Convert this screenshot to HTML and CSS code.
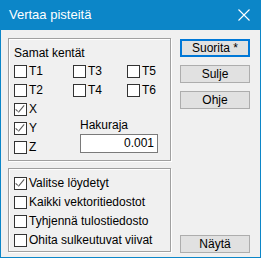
FILE: index.html
```html
<!DOCTYPE html>
<html>
<head>
<meta charset="utf-8">
<link rel="stylesheet" href="styles.css">
</head>
<body>
<div class="window">
  <div class="titlebar">
    <span class="title">Vertaa pisteitä</span>
    <svg class="close" width="12" height="12" viewBox="0 0 12 12"><path d="M0.5 0.5 L11.5 11.5 M11.5 0.5 L0.5 11.5" stroke="#fff" stroke-width="1.1" fill="none"/></svg>
  </div>
  <div class="body">
    <div class="left">
      <div class="group g1">
        <div class="glabel">Samat kentät</div>
        <div class="grid">
          <label class="cb"><span class="box"></span>T1</label>
          <label class="cb"><span class="box"></span>T3</label>
          <label class="cb"><span class="box"></span>T5</label>
          <label class="cb"><span class="box"></span>T2</label>
          <label class="cb"><span class="box"></span>T4</label>
          <label class="cb"><span class="box"></span>T6</label>
        </div>
        <label class="cb row"><span class="box checked"></span>X</label>
        <div class="yz">
          <div class="yzcol">
            <label class="cb row"><span class="box checked"></span>Y</label>
            <label class="cb row"><span class="box"></span>Z</label>
          </div>
          <div class="haku">
            <div class="hlabel">Hakuraja</div>
            <div class="input">0.001</div>
          </div>
        </div>
      </div>
      <div class="group g2">
        <label class="cb row"><span class="box checked"></span>Valitse löydetyt</label>
        <label class="cb row"><span class="box"></span>Kaikki vektoritiedostot</label>
        <label class="cb row"><span class="box"></span>Tyhjennä tulostiedosto</label>
        <label class="cb row"><span class="box"></span>Ohita sulkeutuvat viivat</label>
      </div>
    </div>
    <div class="right">
      <div class="btn default">Suorita *</div>
      <div class="btn">Sulje</div>
      <div class="btn">Ohje</div>
      <div class="spacer"></div>
      <div class="btn">Näytä</div>
    </div>
  </div>
</div>
</body>
</html>
```
FILE: styles.css
```css
* { box-sizing: border-box; }
html, body { margin: 0; padding: 0; }
body {
  font-family: "Liberation Sans", Arial, sans-serif;
  font-size: 12px;
  color: #000;
  background: #f0f0f0;
}
.window {
  width: 261px;
  height: 258px;
  border: 1px solid #0c86c8;
  border-top: none;
  background: #f0f0f0;
  display: flex;
  flex-direction: column;
}
.titlebar {
  height: 30px;
  background: #0c86c8;
  margin: 0 -1px;
  display: flex;
  align-items: center;
  justify-content: space-between;
  padding: 0 11px 0 9px;
  color: #fff;
}
.title { font-size: 13px; line-height: 16px; }
.close { display: block; }
.body {
  flex: 1;
  display: flex;
  padding: 8px 10px 4px 7px;
  gap: 9px;
}
.left { width: 163px; display: flex; flex-direction: column; gap: 7px; }
.group {
  border: 1px solid #a0a0a0;
  box-shadow: inset 1px 1px 0 #fff, 1px 1px 0 #fff;
}
.g1 { height: 123px; padding: 6px 0 0 5px; }
.g2 { height: 84px; padding: 8px 0 0 5px; display: flex; flex-direction: column; gap: 6px; }
.glabel { line-height: 16px; height: 16px; }
.grid {
  display: grid;
  grid-template-columns: 59px 54px 40px;
  row-gap: 6px;
  margin-top: 4px;
}
.cb {
  display: flex;
  align-items: center;
  height: 13px;
  line-height: 13px;
  white-space: nowrap;
}
.box {
  width: 13px;
  height: 13px;
  border: 1px solid #333;
  background: #fff;
  margin-right: 2px;
  flex: none;
  position: relative;
}
.box.checked::after {
  content: "";
  position: absolute;
  left: 1px;
  top: 5px;
  width: 3px;
  height: 1px;
  background: #555;
  transform-origin: 0 0;
  transform: rotate(45deg);
  box-shadow: none;
}
.box.checked::before {
  content: "";
  position: absolute;
  left: 3px;
  top: 8px;
  width: 9px;
  height: 1px;
  background: #555;
  transform-origin: 0 0;
  transform: rotate(-50deg);
}
.row { margin-top: 6px; }
.g2 .row { margin-top: 0; }
.yz { display: flex; }
.yzcol { width: 66px; }
.haku { margin-top: 2px; }
.hlabel { line-height: 14px; height: 14px; }
.input {
  margin-top: 2px;
  width: 78px;
  height: 19px;
  border: 1px solid #7a7a7a;
  background: #fff;
  text-align: right;
  padding-right: 3px;
  line-height: 17px;
}
.right { width: 70px; display: flex; flex-direction: column; gap: 8px; padding-top: 1px; }
.btn {
  height: 18px;
  border: 1px solid #adadad;
  background: #e1e1e1;
  text-align: center;
  line-height: 16px;
}
.btn.default { border: 2px solid #0078d7; line-height: 14px; }
.spacer { flex: 1; }
```
